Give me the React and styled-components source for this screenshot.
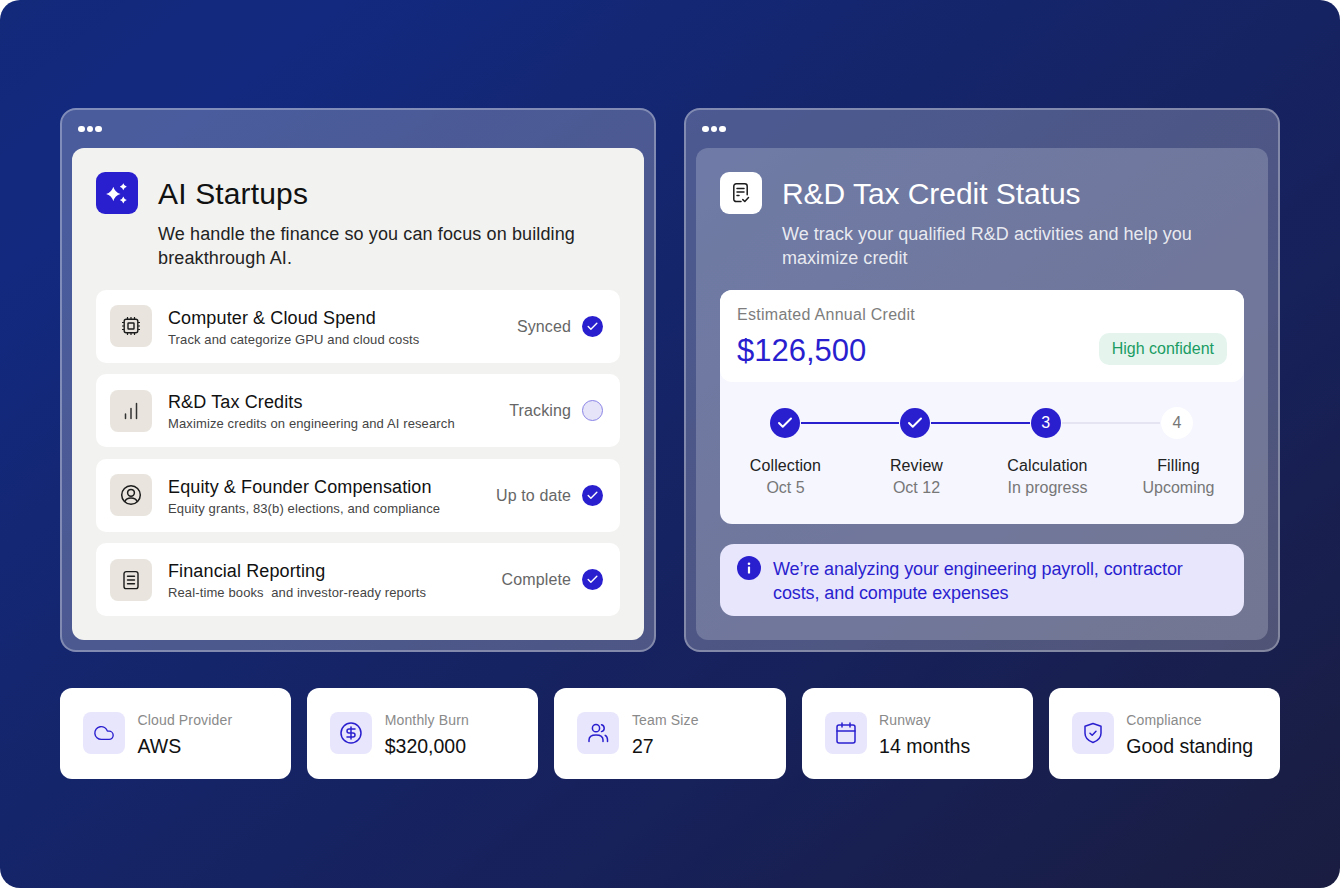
import React from "react";
import styled, { createGlobalStyle } from "styled-components";
import { Cloud, CircleDollarSign, Calendar, Check } from "lucide-react";

const GlobalStyle = createGlobalStyle`
  html, body {
    margin: 0;
    padding: 0;
    background: #ffffff;
    font-family: "Liberation Sans", Arial, sans-serif;
  }
`;

const star = (cx, cy, r) => {
  const k = r * 0.22;
  return `M${cx} ${cy - r}Q${cx + k} ${cy - k} ${cx + r} ${cy}Q${cx + k} ${cy + k} ${cx} ${cy + r}Q${cx - k} ${cy + k} ${cx - r} ${cy}Q${cx - k} ${cy - k} ${cx} ${cy - r}Z`;
};

function Sparkles() {
  return (
    <svg width="24" height="24" viewBox="0 0 24 24" fill="#fff">
      <path d={star(8.3, 13, 7.2)} />
      <path d={star(18.3, 5.7, 3.5)} />
      <path d={star(18.3, 19, 3.5)} />
    </svg>
  );
}

function ChipIcon() {
  return (
    <svg width="20" height="20" viewBox="0 0 20 20" fill="none" stroke="#1c1c1c" strokeWidth="1.4">
      <rect x="3.2" y="3.2" width="13.6" height="13.6" rx="2" />
      <rect x="7" y="7" width="6" height="6" rx="0.6" />
      <path d="M6.5 1v2M10 1v2M13.5 1v2M6.5 17v2M10 17v2M13.5 17v2M1 6.5h2M1 10h2M1 13.5h2M17 6.5h2M17 10h2M17 13.5h2" strokeWidth="1.2" />
    </svg>
  );
}

function BarsIcon() {
  return (
    <svg width="20" height="20" viewBox="0 0 20 20" fill="none" stroke="#333333" strokeWidth="1.5" strokeLinecap="round">
      <path d="M4.5 17.5v-4.500M10 17.500v-10M15.500 17.500v-15" />
    </svg>
  );
}

function PersonIcon() {
  return (
    <svg width="22" height="22" viewBox="0 0 22 22" fill="none" stroke="#1c1c1c" strokeWidth="1.5">
      <circle cx="11" cy="11" r="9.3" />
      <circle cx="11" cy="8.8" r="3.4" />
      <path d="M4.8 17.6c1-2.4 3.4-3.5 6.2-3.5s5.2 1.1 6.2 3.5" />
    </svg>
  );
}

function ReportIcon() {
  return (
    <svg width="20" height="20" viewBox="0 0 20 20" fill="none" stroke="#1c1c1c" strokeWidth="1.4" strokeLinecap="round">
      <rect x="3" y="1.6" width="14" height="17" rx="2.2" />
      <path d="M6.5 6.2h7M6.5 10h7M6.5 13.8h7" />
    </svg>
  );
}

function ClaimIcon() {
  return (
    <svg width="20" height="22" viewBox="0 0 20 22" fill="none" stroke="#1c1c1c" strokeWidth="1.5" strokeLinecap="round" strokeLinejoin="round">
      <path d="M10 19.6H5.2a2.4 2.4 0 0 1-2.4-2.4V4.2a2.4 2.4 0 0 1 2.4-2.4h8.6a2.4 2.4 0 0 1 2.4 2.4v8.6" />
      <path d="M6 6.5h7M6 10h7M6 13.5h2" />
      <path d="M11.8 17.6l2 1.9 3.7-4" />
    </svg>
  );
}

function UsersIcon() {
  return (
    <svg width="24" height="24" viewBox="0 0 24 24" fill="none" stroke="#2a1fcf" strokeWidth="1.5" strokeLinecap="round">
      <circle cx="10" cy="7.2" r="3.6" />
      <path d="M3 20.5v-1.5c0-3 2.6-5 7-5s7 2 7 5v1.5" />
      <path d="M15.5 3.8c1.8.5 2.7 1.9 2.7 3.4s-.9 2.9-2.7 3.4" />
      <path d="M19.2 14.3c1.5.8 2.3 2.4 2.3 4.5v1.7" />
    </svg>
  );
}

function ShieldIcon() {
  return (
    <svg width="24" height="24" viewBox="0 0 24 24" fill="none" stroke="#2a1fcf" strokeWidth="1.5" strokeLinecap="round" strokeLinejoin="round">
      <path d="M12 2.5l8 2.7v7c0 4.6-3.4 7.6-8 9.3-4.6-1.7-8-4.700-8-9.300v-7z" />
      <path d="M9 12.200l2.200 2.100 3.800-4" />
    </svg>
  );
}

function InfoIcon() {
  return (
    <svg width="24" height="24" viewBox="0 0 24 24">
      <circle cx="12" cy="12" r="12" fill="#2a1fcf" />
      <circle cx="12" cy="7.8" r="1.3" fill="#fff" />
      <rect x="10.9" y="10.5" width="2.2" height="7" rx="0.6" fill="#fff" />
    </svg>
  );
}

const services = [
  { icon: <ChipIcon />, title: "Computer & Cloud Spend", sub: "Track and categorize GPU and cloud costs", status: "Synced", done: true },
  { icon: <BarsIcon />, title: "R&D Tax Credits", sub: "Maximize credits on engineering and AI research", status: "Tracking", done: false },
  { icon: <PersonIcon />, title: "Equity & Founder Compensation", sub: "Equity grants, 83(b) elections, and compliance", status: "Up to date", done: true },
  { icon: <ReportIcon />, title: "Financial Reporting", sub: "Real-time books\u00a0 and investor-ready reports", status: "Complete", done: true },
];

const stages = [
  { name: "Collection", when: "Oct 5" },
  { name: "Review", when: "Oct 12" },
  { name: "Calculation", when: "In progress" },
  { name: "Filling", when: "Upcoming" },
];

const stats = [
  { icon: <Cloud size={22} strokeWidth={1.5} />, label: "Cloud Provider", value: "AWS" },
  { icon: <CircleDollarSign size={24} strokeWidth={1.5} />, label: "Monthly Burn", value: "$320,000" },
  { icon: <UsersIcon />, label: "Team Size", value: "27" },
  { icon: <Calendar size={24} strokeWidth={1.5} />, label: "Runway", value: "14 months" },
  { icon: <ShieldIcon />, label: "Compliance", value: "Good standing" },
];

export default function App() {
  return (
    <>
      <GlobalStyle />
      <Canvas>
        <Panels>
          <Panel>
            <WindowDots><i /><i /><i /></WindowDots>
            <Inner>
              <Heading>
                <BrandIcon><Sparkles /></BrandIcon>
                <Title>AI Startups</Title>
                <Lead>We handle the finance so you can focus on building breakthrough AI.</Lead>
              </Heading>
              <ServiceList>
                {services.map((s) => (
                  <ServiceRow key={s.title}>
                    <RowIcon>{s.icon}</RowIcon>
                    <RowText>
                      <RowTitle>{s.title}</RowTitle>
                      <RowSub>{s.sub}</RowSub>
                    </RowText>
                    <Status>{s.status}</Status>
                    <StatusMark $done={s.done}>
                      {s.done && <Check size={13} strokeWidth={2.6} color="#fff" />}
                    </StatusMark>
                  </ServiceRow>
                ))}
              </ServiceList>
            </Inner>
          </Panel>

          <Panel>
            <WindowDots><i /><i /><i /></WindowDots>
            <Inner $glass>
              <Heading>
                <BrandIcon $light><ClaimIcon /></BrandIcon>
                <Title $light>R&amp;D Tax Credit Status</Title>
                <Lead $light>We track your qualified R&amp;D activities and help you maximize credit</Lead>
              </Heading>
              <CreditCard>
                <CreditTop>
                  <div>
                    <CreditLabel>Estimated Annual Credit</CreditLabel>
                    <CreditValue>$126,500</CreditValue>
                  </div>
                  <Confidence>High confident</Confidence>
                </CreditTop>
                <Timeline>
                  <Track>
                    <Step><Check size={18} strokeWidth={2.6} color="#fff" /></Step>
                    <Line $on />
                    <Step><Check size={18} strokeWidth={2.6} color="#fff" /></Step>
                    <Line $on />
                    <Step>3</Step>
                    <Line />
                    <Step $todo>4</Step>
                  </Track>
                  <StageGrid>
                    {stages.map((st) => (
                      <Stage key={st.name}>
                        <StageName>{st.name}</StageName>
                        <StageWhen>{st.when}</StageWhen>
                      </Stage>
                    ))}
                  </StageGrid>
                </Timeline>
              </CreditCard>
              <Notice>
                <InfoIcon />
                <NoticeText>We&rsquo;re analyzing your engineering payroll, contractor costs, and compute expenses</NoticeText>
              </Notice>
            </Inner>
          </Panel>
        </Panels>

        <StatRow>
          {stats.map((st) => (
            <StatCard key={st.label}>
              <StatIcon>{st.icon}</StatIcon>
              <StatText>
                <StatLabel>{st.label}</StatLabel>
                <StatValue>{st.value}</StatValue>
              </StatText>
            </StatCard>
          ))}
        </StatRow>
      </Canvas>
    </>
  );
}

const Canvas = styled.div`
  box-sizing: border-box;
  width: 1340px;
  height: 888px;
  padding: 108px 60px 0;
  border-radius: 20px;
  overflow: hidden;
  background: linear-gradient(141deg, #13297a 0%, #12297f 14%, #15256a 42%, #17215a 68%, #1a1d40 100%);
`;

const Panels = styled.div`
  display: grid;
  grid-template-columns: 596px 596px;
  gap: 28px;
`;

const Panel = styled.section`
  box-sizing: border-box;
  height: 544px;
  padding: 0 10px 10px;
  border: 2px solid rgba(255, 255, 255, 0.3);
  border-radius: 16px;
  background: rgba(255, 255, 255, 0.24);
  display: flex;
  flex-direction: column;
`;

const WindowDots = styled.div`
  height: 38px;
  padding-left: 6px;
  display: flex;
  align-items: center;
  gap: 2px;
  box-sizing: border-box;
  i {
    display: block;
    width: 6.5px;
    height: 6.5px;
    border-radius: 50%;
    background: #ffffff;
  }
`;

const Inner = styled.div`
  flex: 1;
  padding: 24px;
  border-radius: 12px;
  background: ${(p) => (p.$glass ? "rgba(255, 255, 255, 0.2)" : "#f2f2f0")};
`;

const Heading = styled.div`
  display: grid;
  grid-template-columns: 42px 1fr;
  column-gap: 20px;
  row-gap: 6px;
  margin-bottom: 20px;
`;

const BrandIcon = styled.div`
  width: 42px;
  height: 42px;
  border-radius: 9px;
  display: flex;
  align-items: center;
  justify-content: center;
  background: ${(p) => (p.$light ? "#ffffff" : "#2a1fcf")};
`;

const Title = styled.h1`
  margin: 0;
  font-size: 30px;
  font-weight: 400;
  line-height: 44px;
  letter-spacing: ${(p) => (p.$light ? "-0.05px" : "0.15px")};
  color: ${(p) => (p.$light ? "#ffffff" : "#111111")};
`;

const Lead = styled.p`
  grid-column: 2;
  margin: 0;
  font-size: 18px;
  line-height: 24px;
  letter-spacing: ${(p) => (p.$light ? "0.04px" : "0.12px")};
  color: ${(p) => (p.$light ? "rgba(255, 255, 255, 0.86)" : "#222222")};
`;

const ServiceList = styled.div`
  display: flex;
  flex-direction: column;
  gap: 11.5px;
`;

const ServiceRow = styled.div`
  height: 73px;
  padding: 0 17px 0 14px;
  border-radius: 10px;
  background: #ffffff;
  display: flex;
  align-items: center;
`;

const RowIcon = styled.div`
  width: 42px;
  height: 42px;
  border-radius: 8px;
  background: #e9e5de;
  display: flex;
  align-items: center;
  justify-content: center;
  flex-shrink: 0;
`;

const RowText = styled.div`
  flex: 1;
  margin-left: 16px;
  padding-top: 2px;
`;

const RowTitle = styled.div`
  font-size: 18px;
  line-height: 24px;
  letter-spacing: 0.12px;
  color: #111111;
`;

const RowSub = styled.div`
  margin-top: 1px;
  font-size: 13px;
  line-height: 18px;
  letter-spacing: 0.12px;
  color: #444444;
`;

const Status = styled.span`
  padding-top: 1px;
  font-size: 16px;
  letter-spacing: 0.12px;
  color: #666666;
  margin-right: 11px;
`;

const StatusMark = styled.span`
  box-sizing: border-box;
  width: 21px;
  height: 21px;
  border-radius: 50%;
  display: flex;
  align-items: center;
  justify-content: center;
  background: ${(p) => (p.$done ? "#2a1fcf" : "#e6e4f8")};
  border: ${(p) => (p.$done ? "none" : "1.5px solid #8a84e6")};
`;

const CreditCard = styled.div`
  height: 234px;
  border-radius: 12px;
  overflow: hidden;
  background: #f5f6fe;
`;

const CreditTop = styled.div`
  box-sizing: border-box;
  height: 92px;
  padding: 16px 17px 0;
  border-radius: 0 0 12px 12px;
  background: #ffffff;
  display: flex;
  justify-content: space-between;
  align-items: flex-start;
`;

const CreditLabel = styled.div`
  font-size: 16px;
  line-height: 18px;
  letter-spacing: 0.28px;
  color: #7d7d7d;
`;

const CreditValue = styled.div`
  margin-top: 9px;
  font-size: 31px;
  line-height: 36px;
  color: #2a1fcf;
`;

const Confidence = styled.div`
  margin-top: 27px;
  padding: 0 13px;
  height: 32px;
  line-height: 32px;
  border-radius: 10px;
  font-size: 16px;
  color: #1a9c63;
  background: #e5f5ee;
`;

const Timeline = styled.div`
  padding-top: 25px;
`;

const Track = styled.div`
  padding: 0 51px 0 50px;
  display: flex;
  align-items: center;
  height: 32px;
`;

const Step = styled.div`
  box-sizing: border-box;
  width: ${(p) => (p.$todo ? "32px" : "30px")};
  height: ${(p) => (p.$todo ? "32px" : "30px")};
  border-radius: 50%;
  display: flex;
  align-items: center;
  justify-content: center;
  font-size: 16px;
  color: ${(p) => (p.$todo ? "#777777" : "#ffffff")};
  background: ${(p) => (p.$todo ? "#ffffff" : "#2a1fcf")};
`;

const Line = styled.div`
  flex: 1;
  height: 2px;
  margin: 0 1px;
  background: ${(p) => (p.$on ? "#2a1fcf" : "#e4e4f2")};
`;

const StageGrid = styled.div`
  display: grid;
  grid-template-columns: repeat(4, 131px);
  margin-top: 16px;
`;

const Stage = styled.div`
  text-align: center;
`;

const StageName = styled.div`
  font-size: 16px;
  line-height: 22px;
  letter-spacing: 0.1px;
  color: #222222;
`;

const StageWhen = styled.div`
  font-size: 16px;
  line-height: 22px;
  color: #777777;
`;

const Notice = styled.div`
  box-sizing: border-box;
  height: 72px;
  margin-top: 20px;
  padding: 12px 17px;
  border-radius: 14px;
  background: #e8e6fc;
  display: flex;
  gap: 12px;
  align-items: flex-start;
  svg {
    flex-shrink: 0;
  }
`;

const NoticeText = styled.div`
  padding-top: 1px;
  font-size: 18px;
  line-height: 24px;
  letter-spacing: -0.1px;
  color: #2a1fcf;
`;

const StatRow = styled.div`
  display: grid;
  grid-template-columns: repeat(5, 1fr);
  gap: 16px;
  margin-top: 36px;
`;

const StatCard = styled.div`
  box-sizing: border-box;
  height: 91px;
  padding: 0 8px 1px 23px;
  border-radius: 12px;
  background: #ffffff;
  display: flex;
  align-items: center;
  gap: 12.5px;
`;

const StatIcon = styled.div`
  width: 42px;
  height: 42px;
  border-radius: 8px;
  background: #e8e6fc;
  color: #2a1fcf;
  display: flex;
  align-items: center;
  justify-content: center;
  flex-shrink: 0;
`;

const StatText = styled.div`
  padding-top: 3px;
  white-space: nowrap;
`;

const StatLabel = styled.div`
  font-size: 14px;
  line-height: 18px;
  letter-spacing: 0.15px;
  color: #8a8a8a;
`;

const StatValue = styled.div`
  margin-top: 4px;
  font-size: 19.5px;
  line-height: 26px;
  color: #111111;
`;
